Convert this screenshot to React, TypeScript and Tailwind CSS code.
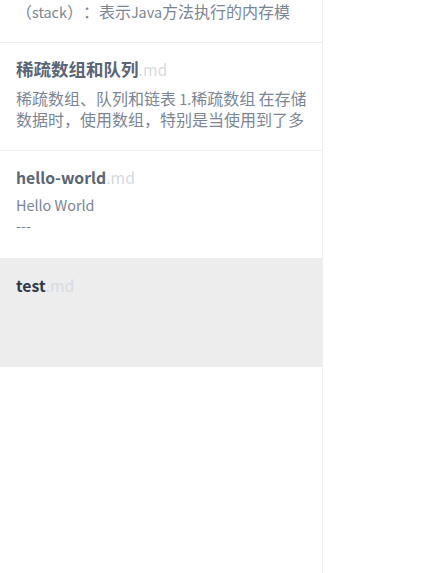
const notes = [
  {
    name: "JVM内存结构",
    lines: [
      "程序计数器、虚拟机栈、本地方法栈 虚拟机栈",
      "（stack）：表示Java方法执行的内存模",
      "型，每个方法在执行的同时都会创建一个栈帧",
    ],
  },
  {
    name: "稀疏数组和队列",
    lines: ["稀疏数组、队列和链表 1.稀疏数组 在存储", "数据时，使用数组，特别是当使用到了多"],
  },
  { name: "hello-world", lines: ["Hello World", "---"] },
  { name: "test", lines: [], active: true },
];

// latin runs get a slightly smaller size so they sit like the narrower latin face next to CJK
function Mixed({ text }: { text: string }) {
  const parts = text.match(/[\x00-\x7f]+|[^\x00-\x7f]+/g) || [];
  const allLatin = parts.length === 1 && /^[\x00-\x7f]+$/.test(parts[0]);
  return (
    <>
      {parts.map((p, i) =>
        /^[\x00-\x7f]+$/.test(p) ? (
          <span key={i} className={`text-[0.9em] leading-none ${allLatin ? "align-[2px]" : ""}`}>{p}</span>
        ) : (
          <span key={i}>{p}</span>
        )
      )}
    </>
  );
}

function NoteItem({ note, first }: { note: any; first?: boolean }) {
  return (
    <div
      className={`h-[108px] shrink-0 border-b px-4 pt-[15px] ${first ? "-mt-[65px]" : ""} ${note.active ? "bg-[#ededed] border-[#ededed]" : "bg-white border-[#eeeeee]"}`}
    >
      <h3 className={`text-[17.5px] leading-[22px] font-bold ${note.active ? "text-[#2d3a4b]" : "text-[#5a6575]"}`}>
        {note.name.match(/^[\x00-\x7f]+$/) ? (
          <span className="text-[0.9em] leading-none">{note.name}</span>
        ) : (
          <Mixed text={note.name} />
        )}
        <span className="text-[0.9em] leading-none font-normal text-[#d6dbe0]">.md</span>
      </h3>
      {note.lines.length > 0 && (
        <div className="mt-2 max-h-[45px] overflow-hidden text-base leading-[21px] text-[#7b8694] [text-spacing-trim:space-all]">
          {note.lines.map((l: string, i: number) => (
            <p key={i} className="whitespace-nowrap">
              <Mixed text={l} />
            </p>
          ))}
        </div>
      )}
    </div>
  );
}

export default function App() {
  return (
    <div
      className="flex h-[573px] w-[445px] overflow-hidden bg-white"
      style={{ fontFamily: '"Noto Sans CJK SC", "Noto Sans", sans-serif' }}
    >
      <div className="flex h-full w-[323px] shrink-0 flex-col overflow-hidden border-r border-[#eeeeee]">
        {notes.map((n, i) => (
          <NoteItem key={n.name} note={n} first={i === 0} />
        ))}
      </div>
      <div className="flex-1" />
    </div>
  );
}
